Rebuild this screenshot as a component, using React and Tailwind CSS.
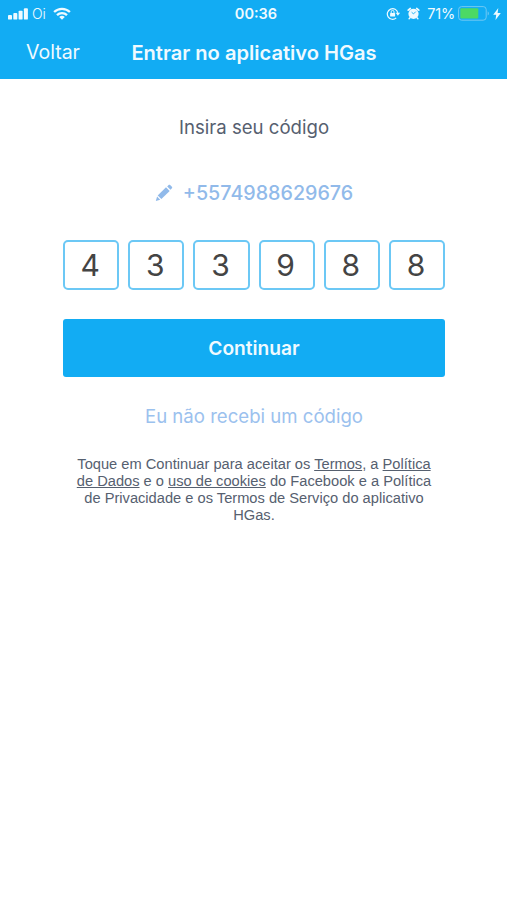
import React from 'react';

const digits = ['4', '3', '3', '9', '8', '8'];

const SignalIcon = () => (
  <svg width="21" height="12" viewBox="0 0 21 12" fill="currentColor">
    <rect x="0" y="7" width="4" height="4.6" rx="0.9" />
    <rect x="5.3" y="5" width="4" height="6.6" rx="0.9" />
    <rect x="10.6" y="2.7" width="4" height="8.9" rx="0.9" />
    <rect x="15.9" y="0.3" width="4" height="11.3" rx="0.9" />
  </svg>
);

const WifiIcon = () => (
  <svg width="18" height="13" viewBox="0 0 18 13" fill="none" stroke="currentColor" strokeWidth="2.3">
    <path d="M1.1 5a11.4 11.4 0 0 1 15.8 0" />
    <path d="M4 8.2a7.2 7.2 0 0 1 10 0" />
    <path d="M9 12.8 6.2 10a4 4 0 0 1 5.6 0z" fill="currentColor" stroke="none" />
  </svg>
);

const RotationLockIcon = () => (
  <svg width="15" height="13" viewBox="0 0 15 13" fill="none" stroke="currentColor">
    <path d="M10.2 10.9a5.3 5.3 0 1 1 1.6-5" strokeWidth="1.2" />
    <path d="M9.7 5.8h4.4l-2.2 3z" fill="currentColor" stroke="none" />
    <rect x="4.1" y="5.9" width="5" height="3.7" rx="0.5" fill="currentColor" stroke="none" />
    <path d="M5.2 6V4.8a1.4 1.4 0 0 1 2.8 0V6" strokeWidth="1" />
  </svg>
);

const AlarmIcon = () => (
  <svg width="13" height="13" viewBox="0 0 13 13" fill="none" stroke="currentColor">
    <circle cx="6.5" cy="6.8" r="5.1" fill="currentColor" stroke="none" />
    <path d="M1.2 3.2 3.3 1.5M11.8 3.2 9.7 1.5" strokeWidth="1.7" strokeLinecap="round" />
    <path d="m3 10.8-.9 1M10 10.8l.9 1" strokeWidth="1.4" strokeLinecap="round" />
    <path d="m4.6 5.2 1.9 1.7L8.8 4.6" stroke="#12acf3" strokeWidth="0.9" />
  </svg>
);

const BatteryIcon = () => (
  <svg width="32" height="15" viewBox="0 0 32 15" fill="none">
    <rect x="0.6" y="0.6" width="27.6" height="13.6" rx="3" stroke="#70c9f3" strokeWidth="1" />
    <rect x="2.3" y="2.3" width="18" height="10.2" rx="1" fill="#4cd964" />
    <path d="M29.7 5.2c1.6.8 1.6 3.6 0 4.4z" fill="#70c9f3" />
  </svg>
);

const BoltIcon = () => (
  <svg width="8" height="12" viewBox="0 0 8 12" fill="currentColor">
    <path d="M5.3 0 0.2 6.8h3L2.5 12 7.8 5H4.6z" />
  </svg>
);

const PencilIcon = () => (
  <svg width="18" height="18" viewBox="0 0 18 18" fill="currentColor">
    <path d="M11 3.2 14.7 6.9 6.4 15 2.7 11.4z" />
    <path d="M12.2 2.4 13.6 1c.5-.5 1-.5 1.5 0l1.8 1.8c.5.5.5 1 0 1.5l-1.4 1.4z" />
    <path d="M2.1 12.6 5.2 15.7 0.8 17.1z" />
  </svg>
);

const StatusBar = () => (
  <div className="grid h-[27px] grid-cols-3 items-center">
    <div className="flex items-center pl-2">
      <SignalIcon />
      <span className="ml-[3px] text-[14px] leading-none font-light">Oi</span>
      <span className="ml-[7px]">
        <WifiIcon />
      </span>
    </div>
    <div className="pt-[2px] pl-[5px] text-center text-[14.5px] leading-none font-semibold">00:36</div>
    <div className="flex items-center justify-end pr-[6px]">
      <RotationLockIcon />
      <span className="ml-[6px]">
        <AlarmIcon />
      </span>
      <span className="ml-[7px] pt-[2px] text-[14.5px] leading-none tracking-[-0.2px]">71%</span>
      <span className="ml-[3px]">
        <BatteryIcon />
      </span>
      <span className="ml-[3px]">
        <BoltIcon />
      </span>
    </div>
  </div>
);

const App = () => {
  return (
    <div className="min-h-screen w-full bg-white font-['Inter',sans-serif]">
      <header className="h-[79px] bg-[#12acf3] text-[#effaff]">
        <StatusBar />
        <div className="grid h-[52px] grid-cols-[131px_1fr_130px] items-center">
          <button className="pl-[26px] text-left text-[19.5px] leading-none">Voltar</button>
          <h1 className="text-center text-[20.1px] leading-none font-semibold whitespace-nowrap">
            Entrar no aplicativo HGas
          </h1>
        </div>
      </header>

      <main className="flex flex-col pr-[62px] pl-[63px] text-center">
        <p className="mt-[36px] text-[18.6px] leading-6 text-[#56606f]">Insira seu código</p>

        <div className="mt-[42px] flex items-center justify-center gap-[10px] text-[#91baea]">
          <PencilIcon />
          <span className="text-[19.7px] leading-6 font-medium">+5574988629676</span>
        </div>

        {/* Code digits */}
        <div className="mt-[35px] grid grid-cols-6 gap-[9px]">
          {digits.map((digit, i) => (
            <div
              key={i}
              className="flex h-[50px] items-center justify-center rounded-[5px] border-2 border-[#6cc8f5] pr-[2px] text-[30px] leading-none text-[#444444]"
            >
              {digit}
            </div>
          ))}
        </div>

        <button className="mt-[29px] h-[58px] rounded-[3px] bg-[#12acf3] text-[19.2px] font-semibold text-[#effaff]">
          Continuar
        </button>

        <a className="mt-[27px] text-[18.6px] leading-6 text-[#9bc1ee]">Eu não recebi um código</a>

        <p className="mt-[28px] font-['Liberation_Sans',sans-serif] text-[14.67px] leading-[17px] whitespace-nowrap text-[#56606f]">
          Toque em Continuar para aceitar os <span className="underline">Termos</span>, a{' '}
          <span className="underline">Política</span>
          <br />
          <span className="underline">de Dados</span> e o <span className="underline">uso de cookies</span> do
          Facebook e a Política
          <br />
          de Privacidade e os Termos de Serviço do aplicativo
          <br />
          HGas.
        </p>
      </main>
    </div>
  );
};

export default App;
